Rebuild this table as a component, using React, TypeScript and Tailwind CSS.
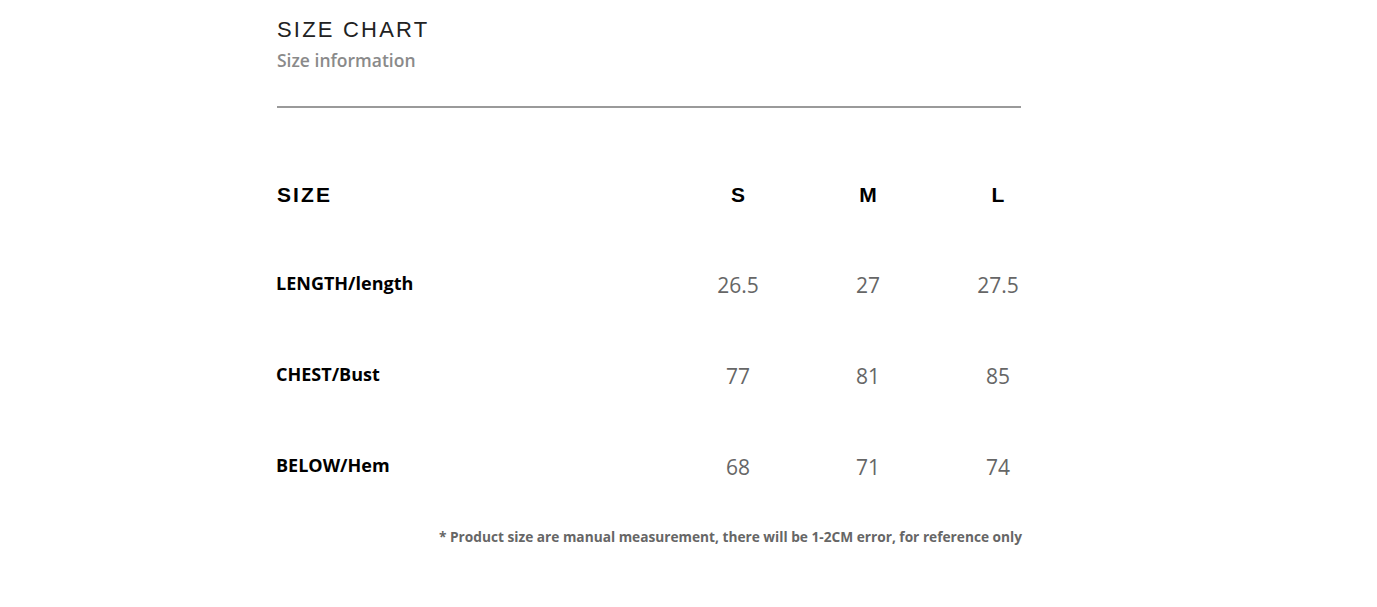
export default function App() {
  const rows = [
    { label: 'LENGTH/length', values: ['26.5', '27', '27.5'] },
    { label: 'CHEST/Bust', values: ['77', '81', '85'] },
    { label: 'BELOW/Hem', values: ['68', '71', '74'] },
  ];

  return (
    <div className="min-h-[607px] w-[1377px] bg-white pl-[277px] pt-[17px]" style={{ fontFamily: '"Open Sans", "Liberation Sans", sans-serif' }}>
      <div className="w-[745px]">
        <h1 className="text-[22px] leading-[26px] tracking-[0.1em] text-[#222]" style={{ fontFamily: '"Liberation Sans", sans-serif' }}>SIZE CHART</h1>
        <p className="mt-[6px] text-[17.5px] font-semibold leading-[22px] text-[#8a8a8a]">Size information</p>
        <div className="mt-[35px] h-[2px] w-[744px] bg-[#9a9a9a]" />

        <div className="mt-[74px] grid grid-cols-[396px_130px_130px_130px] items-center">
          <div className="text-[21px] font-black leading-[26px] tracking-[0.1em] text-black" style={{ fontFamily: '"Liberation Sans", sans-serif' }}>SIZE</div>
          {['S', 'M', 'L'].map((s) => (
            <div key={s} className="text-center text-[21px] font-black leading-[26px] text-black" style={{ fontFamily: '"Liberation Sans", sans-serif' }}>{s}</div>
          ))}
        </div>

        {rows.map((row, idx) => (
          <div key={row.label} className={`${idx === 0 ? 'mt-[62px]' : 'mt-[63px]'} grid grid-cols-[396px_130px_130px_130px] items-center`}>
            <div className="-ml-[1px] pb-[2px] text-[18px] font-bold leading-[26px] text-black">{row.label}</div>
            {row.values.map((v, i) => (
              <div key={i} className="pt-[2px] text-center text-[21px] leading-[26px] text-[#666]">{v}</div>
            ))}
          </div>
        ))}

        <p className="mt-[47px] text-right text-[13.7px] font-bold leading-[20px] text-[#666]">* Product size are manual measurement, there will be 1-2CM error, for reference only</p>
      </div>
    </div>
  );
}
